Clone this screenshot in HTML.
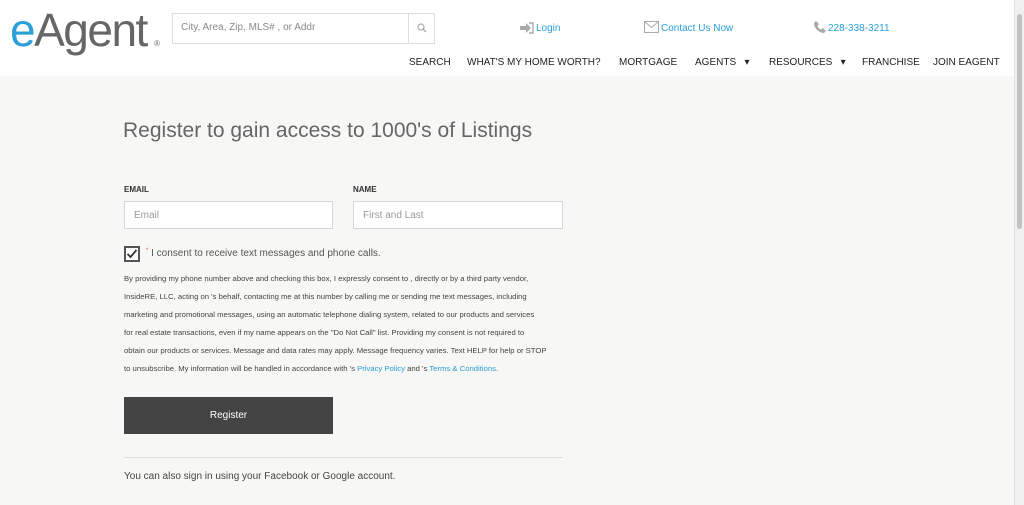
<!DOCTYPE html>
<html><head><meta charset="utf-8"><style>
*{box-sizing:border-box;margin:0;padding:0}
body{width:1024px;height:505px;overflow:hidden;background:#f7f7f5;font-family:"Liberation Sans",sans-serif;color:#333;position:relative}
.hdr{position:absolute;left:0;top:0;width:1014px;height:76px;background:#fff}
.a{position:absolute;white-space:nowrap}
.sb{position:absolute;right:0;top:0;width:10px;height:505px;background:#f0f0f0;border-left:1px solid #e4e4e4}
.sb div{position:absolute;left:2px;top:14px;width:5px;height:215px;background:#c2c2c2;border-radius:3px}
.nav{font-size:10px;color:#222;top:57px}
.blue{color:#2a9fd8}
.inp{position:absolute;background:#fff;border:1px solid #d6d6d6;height:28px;font-size:10px;color:#999;padding:8px 9px}
.p{position:absolute;left:124px;font-size:7.7px;color:#444;white-space:nowrap}
</style></head><body>
<div class="hdr"></div>
<svg style="position:absolute;left:8px;top:4px" width="160" height="54" viewBox="0 0 160 54"><text x="2" y="42" font-family="Liberation Sans" font-size="46" fill="#666" letter-spacing="-1.5"><tspan fill="#2a9fd8">e</tspan>Agent</text><text x="146" y="42" font-size="8" fill="#666" font-family="Liberation Sans">®</text></svg>
<div style="position:absolute;left:172px;top:13px;width:263px;height:31px;border:1px solid #ddd;background:#fff"></div>
<div style="position:absolute;left:408px;top:13px;width:1px;height:31px;background:#ddd"></div>
<div class="a" style="left:181px;top:22px;font-size:10px;color:#888">City, Area, Zip, MLS# , or Addr</div>
<svg style="position:absolute;left:417px;top:23px" width="10" height="10" viewBox="0 0 10 10"><circle cx="4" cy="4" r="3" fill="none" stroke="#aaa" stroke-width="1.2"/><path d="M6 6l3 3" stroke="#aaa" stroke-width="1.3"/></svg>
<svg style="position:absolute;left:520px;top:22px" width="14" height="12" viewBox="0 0 14 12"><path d="M0 4h6V1l5 5-5 5V8H0z" fill="#aaa"/><path d="M9 1h4v10H9" fill="none" stroke="#aaa" stroke-width="1.4"/></svg>
<div class="a blue" style="left:536px;top:23px;font-size:10px">Login</div>
<svg style="position:absolute;left:644px;top:21px" width="15" height="12" viewBox="0 0 15 12"><rect x="0.5" y="0.5" width="14" height="11" fill="none" stroke="#aaa"/><path d="M0.5 0.5l7 6 7-6" fill="none" stroke="#aaa"/></svg>
<div class="a blue" style="left:661px;top:23px;font-size:10px">Contact Us Now</div>
<svg style="position:absolute;left:814px;top:21px" width="12" height="12" viewBox="0 0 12 12"><path d="M2 0l3 3-1.5 2c1 2 2 3 3.5 3.5L9 7l3 3-2 2C5 12 0 7 0 2z" fill="#aaa"/></svg>
<div class="a blue" style="left:828px;top:23px;font-size:10px">228-338-3211</div>
<div class="a nav" style="left:409px">SEARCH</div>
<div class="a nav" style="left:467px">WHAT'S MY HOME WORTH?</div>
<div class="a nav" style="left:619px">MORTGAGE</div>
<div class="a nav" style="left:695px">AGENTS &nbsp;&nbsp;▾</div>
<div class="a nav" style="left:769px">RESOURCES &nbsp;&nbsp;▾</div>
<div class="a nav" style="left:862px">FRANCHISE</div>
<div class="a nav" style="left:933px">JOIN EAGENT</div>
<div class="a" style="left:123px;top:119px;font-size:21px;color:#666;font-weight:300">Register to gain access to 1000's of Listings</div>
<div class="a" style="left:124px;top:185px;font-size:8px;font-weight:bold;color:#333">EMAIL</div>
<div class="a" style="left:353px;top:185px;font-size:8px;font-weight:bold;color:#333">NAME</div>
<div class="inp" style="left:124px;top:201px;width:209px">Email</div>
<div class="inp" style="left:353px;top:201px;width:210px">First and Last</div>
<div style="position:absolute;left:124px;top:246px;width:16px;height:16px;border:2px solid #555;background:#fff"></div>
<svg style="position:absolute;left:126px;top:248px" width="12" height="12" viewBox="0 0 12 12"><path d="M1.5 6l3 3 6-7" fill="none" stroke="#333" stroke-width="1.8"/></svg>
<div class="a" style="left:146px;top:248px;font-size:10px;color:#555"><span style="color:#e44;font-size:6px;vertical-align:top">*</span> I consent to receive text messages and phone calls.</div>
<div class="p" style="top:274px">By providing my phone number above and checking this box, I expressly consent to , directly or by a third party vendor,</div>
<div class="p" style="top:292px">InsideRE, LLC, acting on 's behalf, contacting me at this number by calling me or sending me text messages, including</div>
<div class="p" style="top:310px">marketing and promotional messages, using an automatic telephone dialing system, related to our products and services</div>
<div class="p" style="top:328px">for real estate transactions, even if my name appears on the "Do Not Call" list. Providing my consent is not required to</div>
<div class="p" style="top:346px">obtain our products or services. Message and data rates may apply. Message frequency varies. Text HELP for help or STOP</div>
<div class="p" style="top:364px">to unsubscribe. My information will be handled in accordance with 's <span class="blue">Privacy Policy</span> and 's <span class="blue">Terms &amp; Conditions</span>.</div>
<div style="position:absolute;left:124px;top:397px;width:209px;height:37px;background:#444;color:#fff;font-size:10px;text-align:center;line-height:37px">Register</div>
<div style="position:absolute;left:124px;top:457px;width:439px;height:1px;background:#ddd"></div>
<div class="a" style="left:124px;top:471px;font-size:10px;color:#444">You can also sign in using your Facebook or Google account.</div>
<div class="sb"><div></div></div>
</body></html>
